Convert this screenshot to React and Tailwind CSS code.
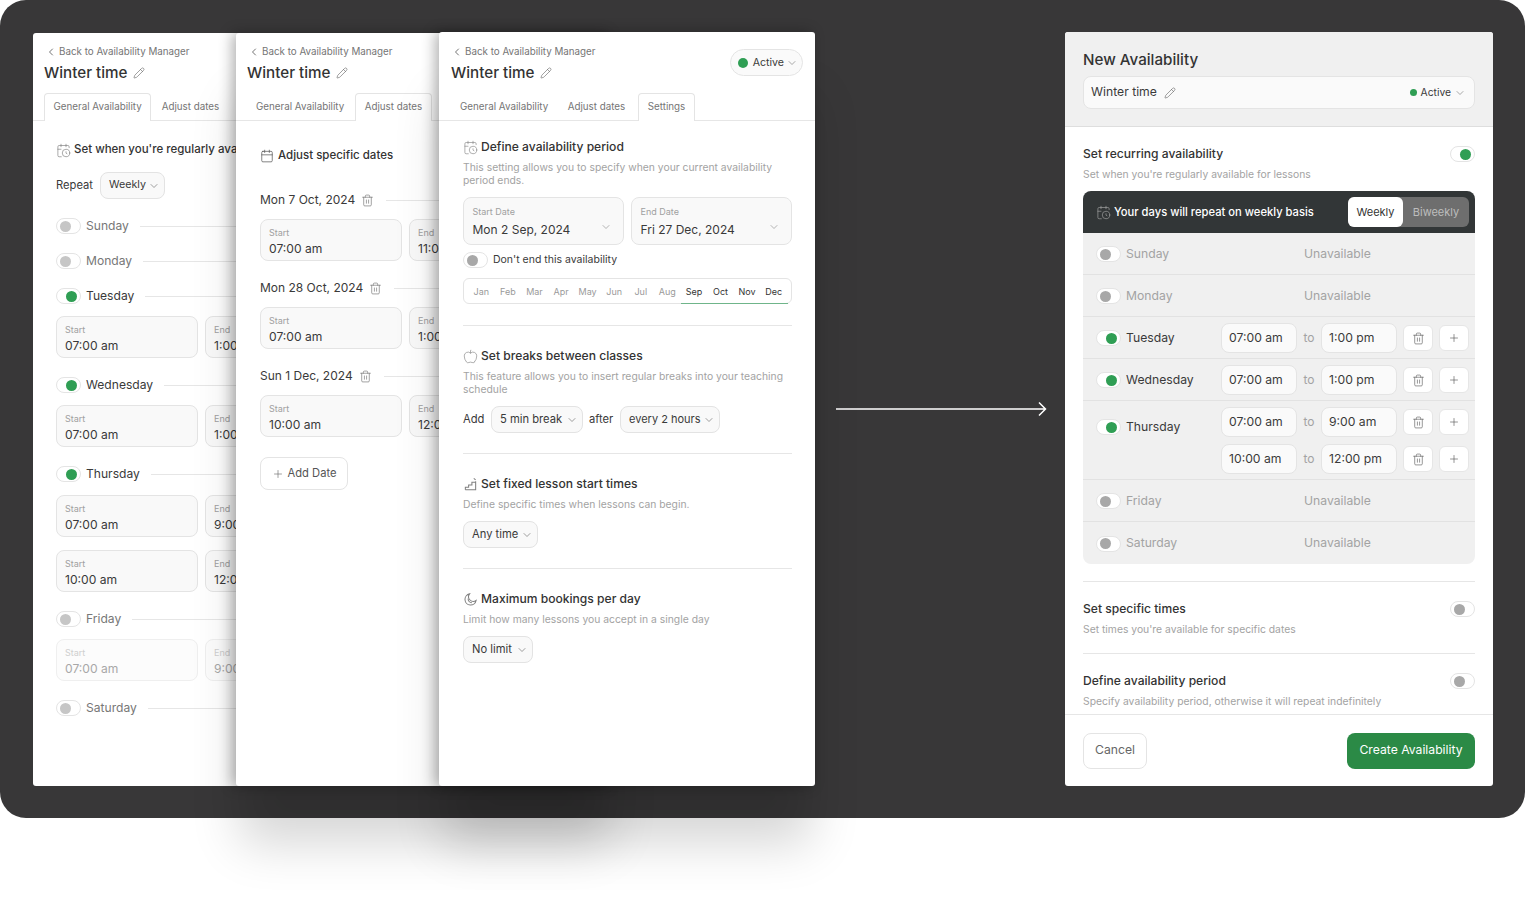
import { ChevronLeft, ChevronDown, Pencil, Trash2, Plus, CalendarClock, Calendar, Apple } from 'lucide-react';

const MONTHS = ['Jan', 'Feb', 'Mar', 'Apr', 'May', 'Jun', 'Jul', 'Aug', 'Sep', 'Oct', 'Nov', 'Dec'];

function StairsIcon({ className }) {
  return (
    <svg viewBox="-1 -1 16 16" fill="none" stroke="currentColor" strokeWidth="1.1" className={className}>
      <path d="M1.5 12.5h11v-9M1.5 12.5v-2.5h3.5v-2.5h3.5v-3h4" />
      <path d="M10.5 0.5l2 1.5" />
    </svg>
  );
}

function CrescentIcon({ className }) {
  return (
    <svg viewBox="-1 -1 16 16" fill="none" stroke="currentColor" strokeWidth="1.1" className={className}>
      <path d="M6 1a6 6 0 1 0 7 7 5 5 0 0 1-7-7z" />
      <path d="M4.5 6a4 4 0 0 0 4 4.5" />
    </svg>
  );
}

function Toggle({ on, muted }) {
  return (
    <div className="flex h-[16px] w-[25px] shrink-0 items-center rounded-full border border-[#e4e4e4] bg-white">
      <div className={`h-[11px] w-[11px] rounded-full ${on ? 'ml-auto mr-[3px] bg-[#2f9e54]' : muted ? 'ml-[3px] bg-[#c6c6c6]' : 'ml-[3px] bg-[#a8a8a8]'}`} />
    </div>
  );
}

function Dropdown({ label, className = '', size = 'text-[11.2px]' }) {
  return (
    <div className={`flex h-[27px] items-center justify-between rounded-lg border border-[#e3e3e3] bg-[#f9f9f9] pl-[8px] pr-[4px] text-[#3a3a3a] ${size} ${className}`}>
      {label}
      <ChevronDown className="h-[12px] w-[12px] text-[#666]" strokeWidth={1.25} />
    </div>
  );
}

function TimeBox({ label, value, disabled }) {
  return (
    <div className={`flex h-[42px] w-[142px] shrink-0 flex-col rounded-lg border px-[8px] pt-[6px] ${disabled ? 'border-[#efefef] bg-[#fcfcfc]' : 'border-[#e4e4e4] bg-[#f9f9f9]'}`}>
      <span className={`text-[9px] leading-[13px] ${disabled ? 'text-[#cfcfcf]' : 'text-[#a0a0a0]'}`}>{label}</span>
      <span className={`mt-px text-[12.1px] leading-[17px] ${disabled ? 'text-[#a8a8a8]' : 'text-[#3a3a3a]'}`}>{value}</span>
    </div>
  );
}

function TimePair({ start, end, disabled, className = '' }) {
  return (
    <div className={`flex gap-[7px] ${className}`}>
      <TimeBox label="Start" value={start} disabled={disabled} />
      <TimeBox label="End" value={end} disabled={disabled} />
    </div>
  );
}

function CardHead({ tab, tabs, titleLeft = 'pl-[11px]', tabsLeft = 'pl-[11px]', status }) {
  return (
    <div className="relative">
      <div className="flex items-center gap-[2px] pl-[12px] pt-[12px] text-[9.8px] leading-[13px] text-[#757575]">
        <ChevronLeft className="h-[12px] w-[12px] text-[#444]" strokeWidth={1.5} />
        Back to Availability Manager
      </div>
      <div className={`mt-[3px] flex h-[24px] items-center gap-[6px] ${titleLeft} text-[15.2px] font-medium text-[#333]`}>
        Winter time
        <Pencil className="h-[12px] w-[12px] text-[#666]" strokeWidth={1.25} />
      </div>
      {status}
      <div className={`mt-[8px] flex h-[28px] items-stretch border-b border-[#e6e6e6] ${tabsLeft} text-[9.8px] text-[#757575]`}>
        {tabs.map((t) => (
          <div
            key={t}
            className={`-mb-px flex items-center rounded-t-[4px] px-[8.5px] ${t === tab ? 'border border-b-0 border-[#e4e4e4] bg-white' : 'mx-[0.5px]'} ${t === 'Adjust dates' ? 'ml-[2px]' : ''} ${t === 'Settings' ? 'ml-[4px]' : ''}`}
          >
            {t}
          </div>
        ))}
      </div>
    </div>
  );
}

function DayLine({ name, on, muted }) {
  return (
    <div className="flex h-[16px] items-center gap-[5px]">
      <Toggle on={on} muted={muted} />
      <span className={`text-[12.1px] ${on ? 'text-[#3a3a3a]' : 'text-[#777]'}`}>{name}</span>
      <div className="ml-[6px] h-px flex-1 bg-[#e6e6e6]" />
    </div>
  );
}

function GeneralCard() {
  return (
    <div className="relative -mr-[173px] h-[753px] w-[376px] shrink-0 overflow-hidden rounded-[3px] bg-white">
      <CardHead tab="General Availability" tabs={['General Availability', 'Adjust dates']} />
      <div className="px-[23px]">
        <div className="mt-[21px] flex h-[16px] items-center gap-[3px] whitespace-nowrap text-[11.5px] font-medium text-[#333]">
          <CalendarClock className="h-[15px] w-[15px] text-[#777]" strokeWidth={1} />
          Set when you're regularly available
        </div>
        <div className="mt-[14px] flex items-center gap-[7px] text-[11.2px] text-[#3a3a3a]">
          Repeat
          <Dropdown label="Weekly" size="text-[10.7px]" className="w-[65px]" />
        </div>
        <div className="mt-[19px]"><DayLine name="Sunday" muted /></div>
        <div className="mt-[19px]"><DayLine name="Monday" muted /></div>
        <div className="mt-[19px]"><DayLine name="Tuesday" on /></div>
        <TimePair start="07:00 am" end="1:00 pm" className="mt-[12px]" />
        <div className="mt-[19px]"><DayLine name="Wednesday" on /></div>
        <TimePair start="07:00 am" end="1:00 pm" className="mt-[12px]" />
        <div className="mt-[19px]"><DayLine name="Thursday" on /></div>
        <TimePair start="07:00 am" end="9:00 am" className="mt-[13px]" />
        <TimePair start="10:00 am" end="12:00 pm" className="mt-[13px]" />
        <div className="mt-[19px]"><DayLine name="Friday" muted /></div>
        <TimePair start="07:00 am" end="9:00 am" disabled className="mt-[12px]" />
        <div className="mt-[19px]"><DayLine name="Saturday" muted /></div>
      </div>
    </div>
  );
}

function DateGroup({ date, start, end, className = '' }) {
  return (
    <div className={className}>
      <div className="flex h-[16px] items-center gap-[6px] text-[12px] text-[#3a3a3a]">
        {date}
        <Trash2 className="h-[13px] w-[13px] text-[#777]" strokeWidth={1.25} />
        <div className="ml-[6px] h-px flex-1 bg-[#e6e6e6]" />
      </div>
      <TimePair start={start} end={end} className="mt-[11px]" />
    </div>
  );
}

function DatesCard() {
  return (
    <div className="relative -mr-[173px] h-[753px] w-[376px] shrink-0 overflow-hidden rounded-[3px] bg-white shadow-[0_62px_46px_-4px_rgba(0,0,0,0.16),-4px_0_14px_rgba(0,0,0,0.3)]">
      <CardHead tab="Adjust dates" tabs={['General Availability', 'Adjust dates']} />
      <div className="px-[24px]">
        <div className="mt-[27px] flex h-[16px] items-center gap-[4px] text-[11.5px] font-medium text-[#333]">
          <Calendar className="h-[14px] w-[14px] text-[#555]" strokeWidth={1.25} />
          Adjust specific dates
        </div>
        <DateGroup date="Mon 7 Oct, 2024" start="07:00 am" end="11:00 am" className="mt-[28px]" />
        <DateGroup date="Mon 28 Oct, 2024" start="07:00 am" end="1:00 pm" className="mt-[19px]" />
        <DateGroup date="Sun 1 Dec, 2024" start="10:00 am" end="12:00 pm" className="mt-[19px]" />
        <div className="mt-[20px] flex h-[33px] w-[88px] items-center justify-center gap-[4px] rounded-lg border border-[#e4e4e4] bg-white text-[11.2px] text-[#555]">
          <Plus className="h-[12px] w-[12px] text-[#666]" strokeWidth={1.25} />
          Add Date
        </div>
      </div>
    </div>
  );
}

function SettingHeading({ icon: Icon, children }) {
  return (
    <div className="flex h-[16px] items-center gap-[3px] text-[12.1px] font-medium text-[#333]">
      <Icon className="h-[15px] w-[15px] text-[#808080]" strokeWidth={1} />
      {children}
    </div>
  );
}

function DateSelect({ label, value }) {
  return (
    <div className="flex h-[48px] flex-1 items-center justify-between rounded-lg border border-[#e4e4e4] bg-[#f9f9f9] px-[8.5px]">
      <div className="flex flex-col">
        <span className="text-[9px] leading-[13px] text-[#a0a0a0]">{label}</span>
        <span className="mt-[3px] text-[12px] leading-[17px] text-[#3a3a3a]">{value}</span>
      </div>
      <ChevronDown className="mr-[3px] mt-[12px] h-[12px] w-[12px] text-[#888]" strokeWidth={1.25} />
    </div>
  );
}

function SettingsCard() {
  const status = (
    <div className="absolute right-[12px] top-[16px] flex h-[27px] items-center rounded-full border border-[#e4e4e4] bg-[#fafafa] pl-[7px] pr-[4px] text-[10.6px] text-[#3a3a3a]">
      <span className="h-[10px] w-[10px] rounded-full bg-[#2f9e54]" />
      <span className="ml-[5px]">Active</span>
      <ChevronDown className="ml-[2px] h-[12px] w-[12px] text-[#777]" strokeWidth={1.25} />
    </div>
  );
  return (
    <div className="relative z-10 h-[754px] w-[376px] shrink-0 -translate-y-px overflow-hidden rounded-[3px] bg-white shadow-[0_62px_46px_-4px_rgba(0,0,0,0.16),-4px_0_14px_rgba(0,0,0,0.3)]">
      <div className="pt-px">
        <CardHead tab="Settings" tabs={['General Availability', 'Adjust dates', 'Settings']} titleLeft="pl-[12px]" tabsLeft="pl-[12px]" status={status} />
      </div>
      <div className="pl-[24px] pr-[23px]">
        <div className="mt-[18px]"><SettingHeading icon={CalendarClock}>Define availability period</SettingHeading></div>
        <p className="mt-[6px] text-[10.35px] leading-[13px] text-[#a3a3a3]">This setting allows you to specify when your current availability period ends.</p>
        <div className="mt-[10px] flex gap-[7px]">
          <DateSelect label="Start Date" value="Mon 2 Sep, 2024" />
          <DateSelect label="End Date" value="Fri 27 Dec, 2024" />
        </div>
        <div className="mt-[7px] flex h-[16px] items-center gap-[5px] text-[10.5px] text-[#3a3a3a]">
          <Toggle />
          Don't end this availability
        </div>
        <div className="relative mt-[10px] flex h-[26px] items-center rounded-md border border-[#e4e4e4] bg-white px-[4px] pt-px text-[9px]">
          {MONTHS.map((m, i) => (
            <span key={m} className={`flex-1 text-center ${i >= 8 ? 'text-[#333]' : 'text-[#9a9a9a]'}`}>{m}</span>
          ))}
          <div className="absolute bottom-[-1px] left-[217px] h-[1.5px] w-[107px] bg-[#6fb58a]" />
        </div>
        <div className="mt-[21px] h-px bg-[#e6e6e6]" />
        <div className="mt-[22px]"><SettingHeading icon={Apple}>Set breaks between classes</SettingHeading></div>
        <p className="mt-[6px] text-[10.35px] leading-[13px] text-[#a3a3a3]">This feature allows you to insert regular breaks into your teaching schedule</p>
        <div className="mt-[10px] flex items-center text-[11.2px] text-[#3a3a3a]">
          <span className="w-[28px]">Add</span>
          <Dropdown label="5 min break" className="w-[92px]" />
          <span className="ml-[6px] w-[31px]">after</span>
          <Dropdown label="every 2 hours" size="text-[11px]" className="w-[100px]" />
        </div>
        <div className="mt-[20px] h-px bg-[#e6e6e6]" />
        <div className="mt-[22px]"><SettingHeading icon={StairsIcon}>Set fixed lesson start times</SettingHeading></div>
        <p className="mt-[6px] text-[10.35px] leading-[13px] text-[#a3a3a3]">Define specific times when lessons can begin.</p>
        <Dropdown label="Any time" className="mt-[10px] w-[75px]" />
        <div className="mt-[20px] h-px bg-[#e6e6e6]" />
        <div className="mt-[22px]"><SettingHeading icon={CrescentIcon}>Maximum bookings per day</SettingHeading></div>
        <p className="mt-[6px] text-[10.35px] leading-[13px] text-[#a3a3a3]">Limit how many lessons you accept in a single day</p>
        <Dropdown label="No limit" className="mt-[10px] w-[70px]" />
      </div>
    </div>
  );
}

function OffRow({ name }) {
  return (
    <div className="flex h-[42px] items-center border-b border-[#e2e2e2] pl-[13px] pt-px last:border-b-0">
      <Toggle />
      <span className="ml-[5px] w-[178px] text-[12.2px] text-[#a3a3a3]">{name}</span>
      <span className="text-[12.2px] text-[#a3a3a3]">Unavailable</span>
    </div>
  );
}

function TimeRange({ start, end }) {
  return (
    <div className="flex items-center">
      <div className="flex h-[30px] w-[76px] items-center rounded-lg border border-[#e4e4e4] bg-[#fafafa] pl-[7px] text-[12.2px] text-[#3a3a3a]">{start}</div>
      <span className="w-[24px] text-center text-[12px] text-[#a3a3a3]">to</span>
      <div className="flex h-[30px] w-[76px] items-center rounded-lg border border-[#e4e4e4] bg-[#fafafa] pl-[7px] text-[12.2px] text-[#3a3a3a]">{end}</div>
      <div className="ml-[6px] flex h-[26px] w-[30px] items-center justify-center rounded-md border border-[#e6e6e6] bg-white">
        <Trash2 className="h-[13px] w-[13px] text-[#666]" strokeWidth={1.25} />
      </div>
      <div className="ml-[6px] flex h-[26px] w-[30px] items-center justify-center rounded-md border border-[#e6e6e6] bg-white">
        <Plus className="h-[12px] w-[12px] text-[#555]" strokeWidth={1.25} />
      </div>
    </div>
  );
}

function OnRow({ name, ranges }) {
  if (ranges.length > 1) {
    return (
      <div className="flex h-[79px] items-start border-b border-[#e2e2e2] pl-[13px] pr-[6px] pt-[6px]">
        <div className="mt-[11px] flex flex-1 items-center">
          <Toggle on />
          <span className="ml-[5px] text-[12.2px] text-[#3a3a3a]">{name}</span>
        </div>
        <div className="flex flex-col gap-[7px]">
          {ranges.map((r) => <TimeRange key={r[0]} start={r[0]} end={r[1]} />)}
        </div>
      </div>
    );
  }
  return (
    <div className="flex h-[42px] items-center border-b border-[#e2e2e2] pl-[13px] pr-[6px] pt-px">
      <Toggle on />
      <span className="ml-[5px] flex-1 text-[12.2px] text-[#3a3a3a]">{name}</span>
      <TimeRange start={ranges[0][0]} end={ranges[0][1]} />
    </div>
  );
}

function NewAvailability() {
  return (
    <div className="ml-auto flex h-[754px] w-[428px] shrink-0 -translate-y-px flex-col overflow-hidden rounded-[3px] bg-white">
      <div className="h-[95px] border-b border-[#dedede] bg-[#f0f0f0] px-[18px] pt-[17px]">
        <div className="text-[15.2px] font-medium leading-[22px] text-[#333]">New Availability</div>
        <div className="mt-[5px] flex h-[33px] items-center rounded-lg border border-[#e4e4e4] bg-[#fafafa] pl-[7px] pr-[8px] text-[12.2px] text-[#3a3a3a]">
          Winter time
          <Pencil className="ml-[7px] h-[12px] w-[12px] text-[#666]" strokeWidth={1.25} />
          <span className="ml-auto h-[7px] w-[7px] rounded-full bg-[#2f9e54]" />
          <span className="ml-[4px] text-[10.3px]">Active</span>
          <ChevronDown className="ml-[3px] h-[12px] w-[12px] text-[#777]" strokeWidth={1.25} />
        </div>
      </div>
      <div className="flex-1 overflow-hidden px-[18px]">
        <div className="mt-[19px] flex h-[16px] items-center justify-between text-[12.1px] font-medium text-[#333]">
          Set recurring availability
          <Toggle on />
        </div>
        <p className="mt-[5px] text-[10.35px] leading-[14px] text-[#a3a3a3]">Set when you're regularly available for lessons</p>
        <div className="mt-[10px] flex h-[42px] items-center rounded-t-lg bg-[#323637] pl-[13px] pr-[6px] text-[11.2px] font-medium text-white">
          <CalendarClock className="h-[15px] w-[15px] text-[#aaa]" strokeWidth={1} />
          <span className="ml-[3px]">Your days will repeat on weekly basis</span>
          <div className="ml-auto flex h-[30px] w-[121px] rounded-md bg-[#6e6e6e] text-[11px] font-normal">
            <div className="flex w-[55px] items-center justify-center rounded-md bg-white text-[#333]">Weekly</div>
            <div className="flex flex-1 items-center justify-center text-[#bdbdbd]">Biweekly</div>
          </div>
        </div>
        <div className="overflow-hidden rounded-b-lg bg-[#f0f0f0]">
          <OffRow name="Sunday" />
          <OffRow name="Monday" />
          <OnRow name="Tuesday" ranges={[['07:00 am', '1:00 pm']]} />
          <OnRow name="Wednesday" ranges={[['07:00 am', '1:00 pm']]} />
          <OnRow name="Thursday" ranges={[['07:00 am', '9:00 am'], ['10:00 am', '12:00 pm']]} />
          <OffRow name="Friday" />
          <OffRow name="Saturday" />
        </div>
        <div className="mt-[17px] h-px bg-[#e6e6e6]" />
        <div className="mt-[19px] flex h-[16px] items-center justify-between text-[12.1px] font-medium text-[#333]">
          Set specific times
          <Toggle />
        </div>
        <p className="mt-[5px] text-[10.35px] leading-[14px] text-[#a3a3a3]">Set times you're available for specific dates</p>
        <div className="mt-[17px] h-px bg-[#e6e6e6]" />
        <div className="mt-[19px] flex h-[16px] items-center justify-between text-[12.1px] font-medium text-[#333]">
          Define availability period
          <Toggle />
        </div>
        <p className="mt-[5px] text-[10.35px] leading-[14px] text-[#a3a3a3]">Specify availability period, otherwise it will repeat indefinitely</p>
      </div>
      <div className="flex h-[72px] items-center justify-between border-t border-[#e6e6e6] px-[18px]">
        <div className="flex h-[36px] w-[64px] items-center justify-center rounded-lg border border-[#e4e4e4] bg-white text-[12.2px] text-[#666]">Cancel</div>
        <div className="flex h-[36px] w-[128px] items-center justify-center rounded-lg bg-[#2b8a46] text-[12.2px] text-white">Create Availability</div>
      </div>
    </div>
  );
}

export default function App() {
  return (
    <div className="h-[919px] w-[1525px] overflow-hidden bg-white font-['Inter',sans-serif]">
      <div className="flex h-[818px] items-start rounded-[26px] bg-[#383738] px-[32px] pt-[33px]">
        <div className="ml-px flex">
          <GeneralCard />
          <DatesCard />
          <SettingsCard />
        </div>
        <svg viewBox="0 0 212 16" fill="none" stroke="white" strokeWidth="1.5" className="ml-[21px] mt-[368px] h-[16px] w-[212px] shrink-0">
          <path d="M0 8h209M203 1.5 209.5 8 203 14.5" />
        </svg>
        <NewAvailability />
      </div>
    </div>
  );
}
